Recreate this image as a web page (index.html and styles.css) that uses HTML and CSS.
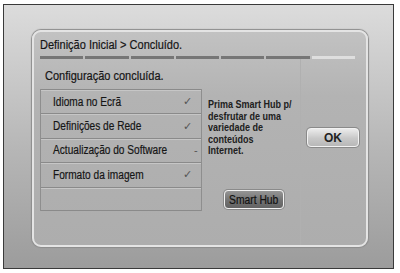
FILE: index.html
```html
<!DOCTYPE html>
<html lang="pt">
<head>
	<meta charset="UTF-8">
	<title>Definição Inicial</title>
	<link rel="stylesheet" href="styles.css">
</head>
<body>
	<div class="frame">
		<div class="panel">
			<div class="head">
				<div class="title"><span class="cond">Definição Inicial &gt; Concluído.</span></div>
				<div class="steps">
					<span></span><span></span><span></span><span></span><span></span><span></span><span class="todo"></span>
				</div>
			</div>
			<div class="body">
				<div class="main">
					<div class="subtitle"><span class="cond">Configuração concluída.</span></div>
					<div class="content">
						<div class="list">
							<div class="row"><span class="cond">Idioma no Ecrã</span><i>✓</i></div>
							<div class="row"><span class="cond">Definições de Rede</span><i>✓</i></div>
							<div class="row"><span class="cond">Actualização do Software</span><i>-</i></div>
							<div class="row"><span class="cond">Formato da imagem</span><i>✓</i></div>
							<div class="row"></div>
						</div>
						<div class="info">
							<p class="cond">Prima Smart Hub p/<br>desfrutar de uma<br>variedade de<br>conteúdos<br>Internet.</p>
							<span class="btn dark"><span class="cond">Smart Hub</span></span>
						</div>
					</div>
				</div>
				<div class="side">
					<span class="btn">OK</span>
				</div>
			</div>
		</div>
	</div>
</body>
</html>
```

FILE: styles.css
```css
html{
	background:#fff;
}
body{
	margin:0;
	font-family:"Liberation Sans",Arial,sans-serif;
	color:#151515;
}
/* no narrow face installed, so squeeze the text a little */
.cond{
	display:inline-block;
	white-space:nowrap;
	transform:scaleX(.88);
	transform-origin:0 50%;
	-webkit-text-stroke:.2px #151515;
}
.frame{
	box-sizing:border-box;
	width:391px;
	height:265px;
	margin:4px 0 0 3px;
	padding:25px 0 0 28px;
	border:1px solid #3a3a3a;
	background:linear-gradient(#dcdcdc, #b6b6b6 55%, #9c9c9c);
}
.panel{
	box-sizing:border-box;
	width:336px;
	height:217px;
	border:2px solid #e4e4e4;
	border-radius:9px;
	box-shadow:0 0 1px 1px #8c8c8c;
	background:linear-gradient(#c2c2c2, #b3b3b3 30%, #adadad);
	display:flex;
	flex-direction:column;
}
.title{
	padding:6px 0 0 6px;
	font-size:12.5px;
	line-height:14px;
}
.steps{
	display:flex;
	gap:2px;
	width:315px;
	height:3px;
	margin:4px 0 0 6px;
}
.steps span{
	flex:1;
	background:#767676;
}
.steps span.todo{
	background:#dedede;
}
.body{
	flex:1;
	display:flex;
}
.main{
	width:266px;
}
.subtitle{
	margin:10px 0 0 11px;
	font-size:12.5px;
	line-height:14px;
}
.content{
	display:flex;
	margin-top:6px;
}
.list{
	flex:none;
	width:162px;
	margin-left:6px;
	border-left:1px solid #8e8e8e;
	border-right:1px solid #8e8e8e;
	box-sizing:border-box;
}
.row{
	box-sizing:border-box;
	height:24.4px;
	display:flex;
	align-items:center;
	justify-content:space-between;
	padding:0 9px 0 12px;
	border-top:1px solid #8a8a8a;
	box-shadow:inset 0 1px 0 #c6c6c6;
	font-size:12.5px;
}
.row .cond{
	transform:scaleX(.81);
}
.row:last-child{
	border-bottom:1px solid #8a8a8a;
}
.row i{
	font-style:normal;
	font-size:11px;
	color:#555;
}
.info{
	padding:10px 0 0 6px;
	width:93px;
}
.info p{
	margin:0;
	font-size:10px;
	line-height:11.5px;
	font-weight:bold;
	color:#202020;
	transform:scaleX(.9);
	transform-origin:0 0;
	-webkit-text-stroke:0;
}
.btn{
	box-sizing:border-box;
	display:flex;
	align-items:center;
	justify-content:center;
	width:52px;
	height:19px;
	border:1px solid #f2f2f2;
	border-radius:4px;
	box-shadow:0 0 0 1px #8a8a8a;
	background:linear-gradient(#ebebeb, #c8c8c8 55%, #b8b8b8);
	font-size:12px;
	font-weight:bold;
	color:#222;
}
.btn.dark{
	width:60px;
	margin:32px 0 0 16px;
	background:linear-gradient(#959595, #737373 55%, #636363);
	color:#111;
	font-weight:normal;
	font-size:12px;
}
.btn.dark .cond{
	transform:scaleX(.86);
	transform-origin:50% 50%;
}
.side{
	flex:1;
	border-left:1px solid #b0b0b0;
	padding:69px 0 0 6px;
}
```
